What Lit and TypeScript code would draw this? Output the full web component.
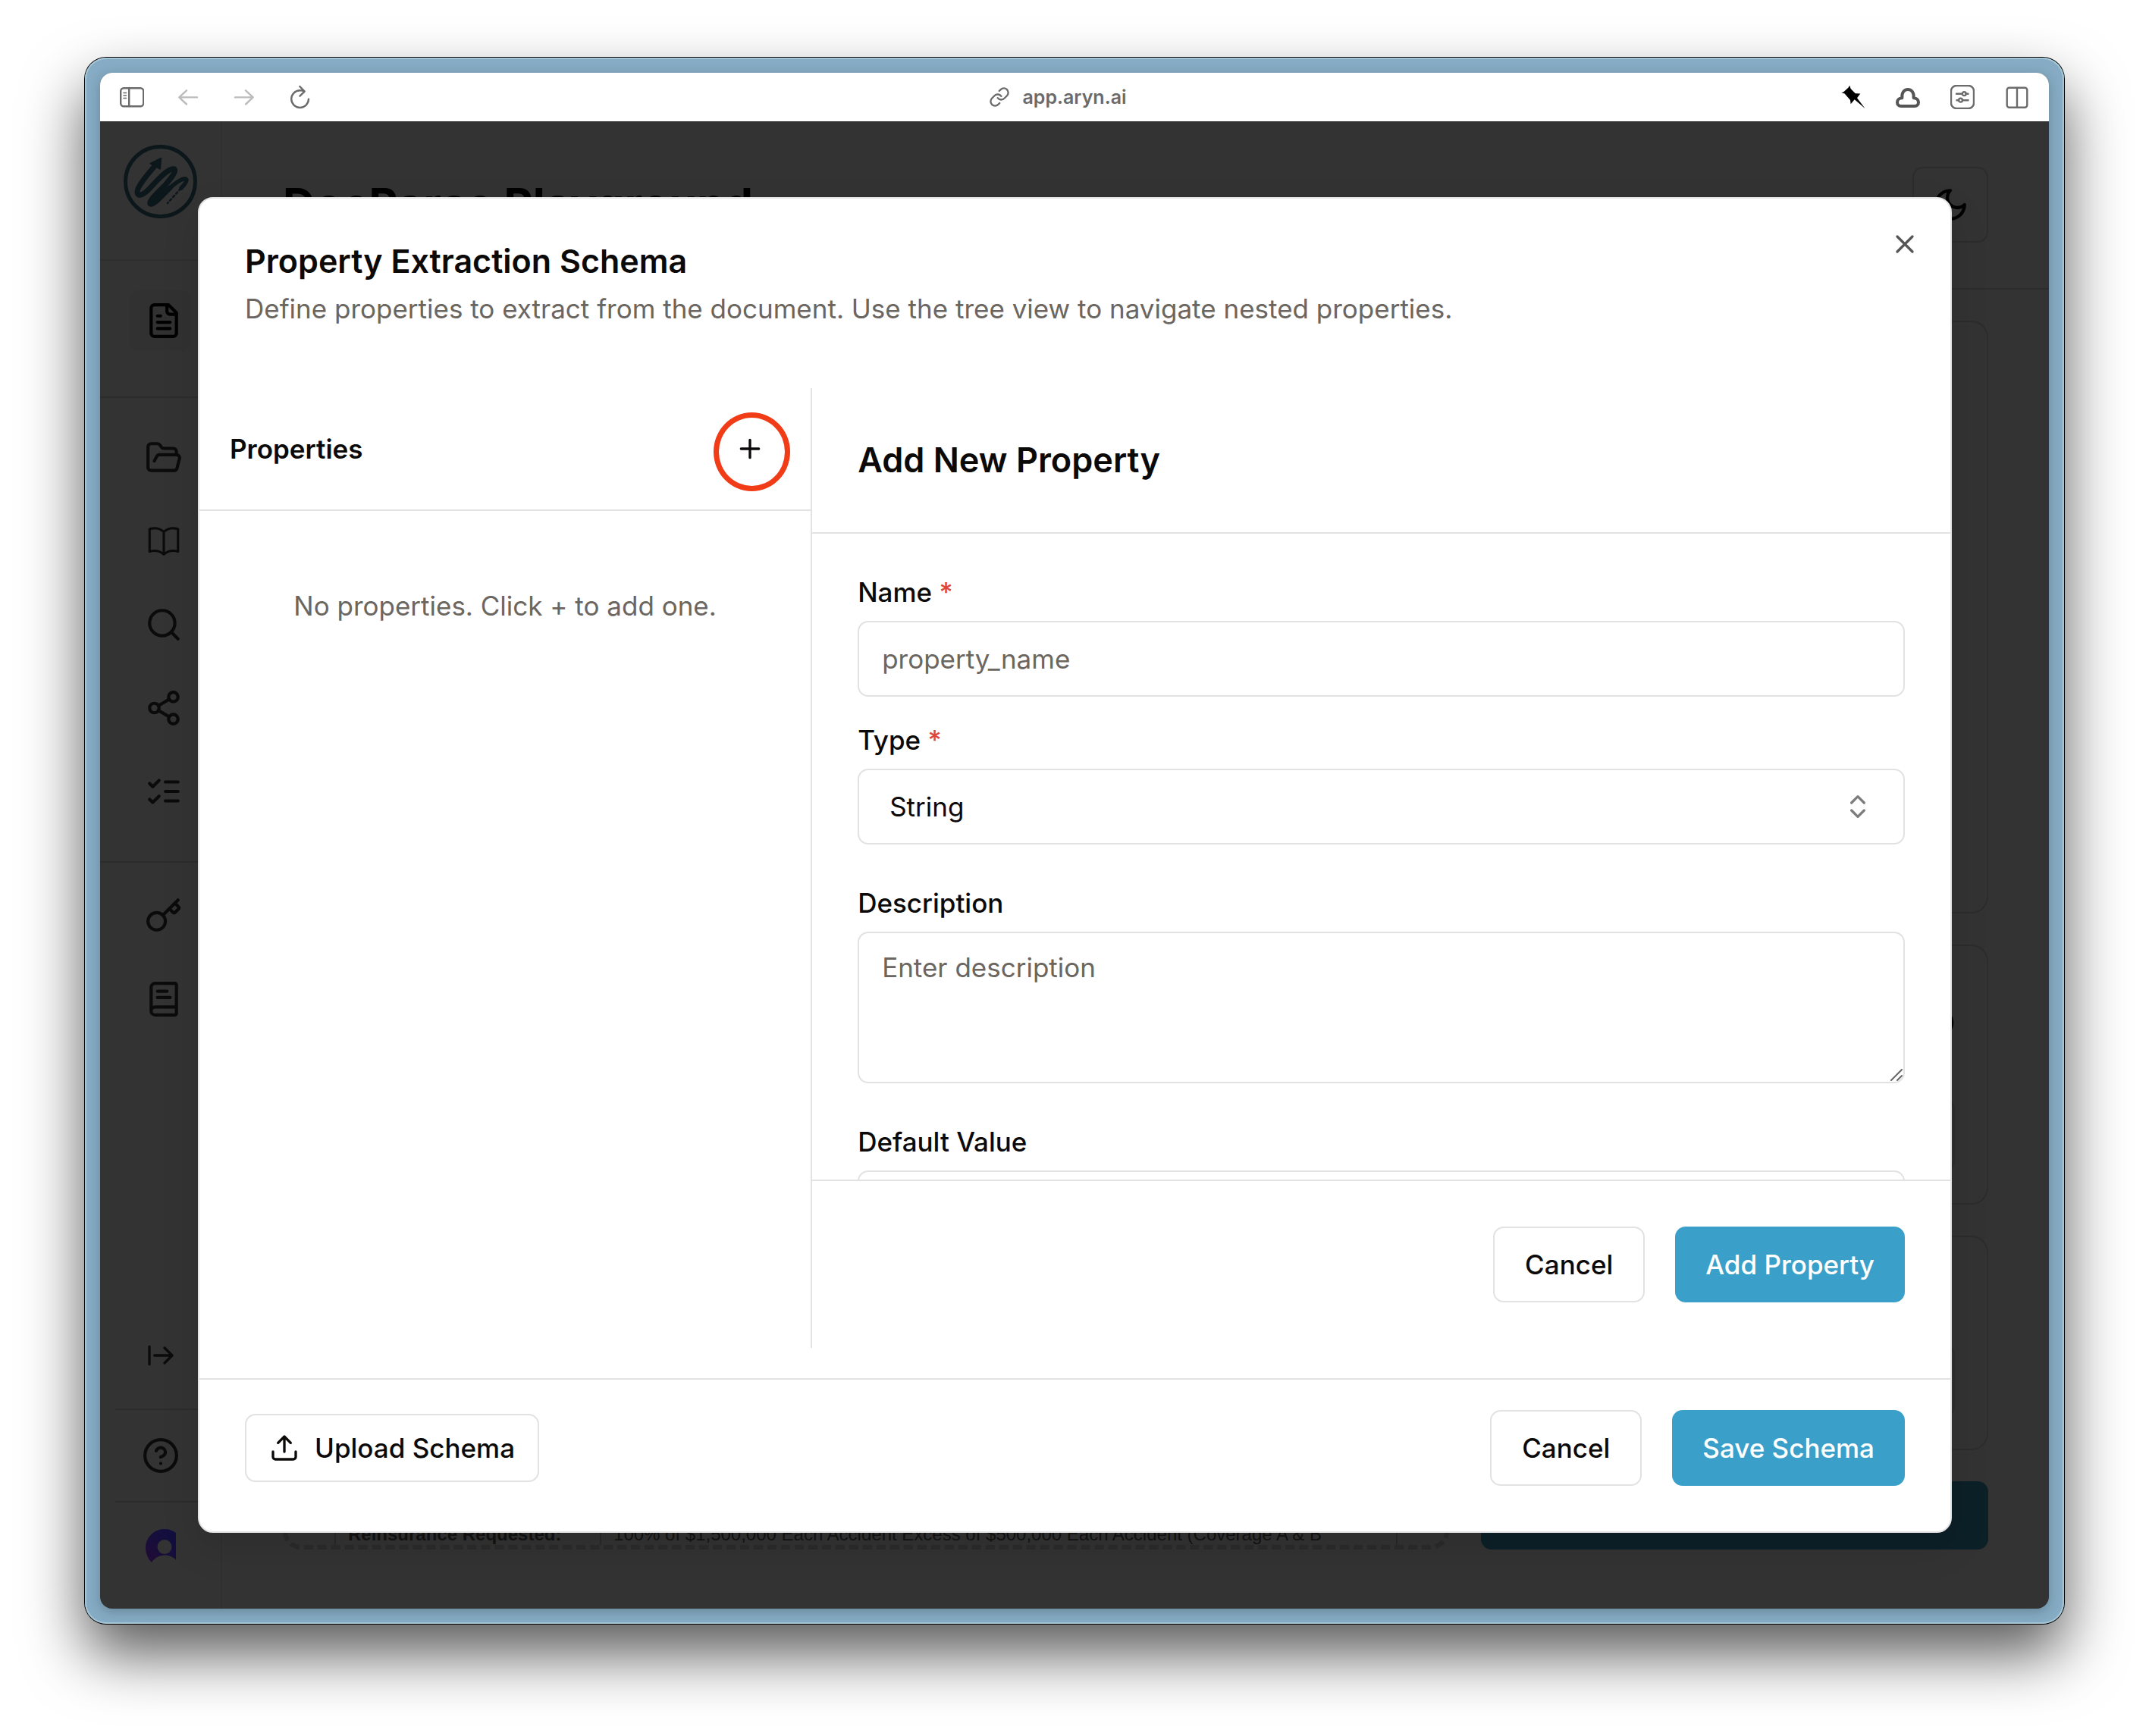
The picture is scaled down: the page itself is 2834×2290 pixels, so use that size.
import { LitElement, html, css, svg, nothing } from "lit";
import type { SVGTemplateResult } from "lit";
import { customElement, state } from "lit/decorators.js";

/* Stroke icons on a 24-unit grid. */
const icons: Record<string, SVGTemplateResult> = {
  file: svg`<path d="M15 2H6a2 2 0 0 0-2 2v16a2 2 0 0 0 2 2h12a2 2 0 0 0 2-2V7Z"/><path d="M14 2v4a2 2 0 0 0 2 2h4M10 9H8M16 13H8M16 17H8"/>`,
  folder: svg`<path d="m6 14 1.5-2.9A2 2 0 0 1 9.24 10H20a2 2 0 0 1 1.94 2.5l-1.54 6a2 2 0 0 1-1.95 1.5H4a2 2 0 0 1-2-2V5a2 2 0 0 1 2-2h3.9a2 2 0 0 1 1.69.9l.81 1.2a2 2 0 0 0 1.67.9H18a2 2 0 0 1 2 2v2"/>`,
  book: svg`<path stroke-width="1.5" d="M12 6.042A8.967 8.967 0 0 0 6 3.75c-1.052 0-2.062.18-3 .512v14.25A8.987 8.987 0 0 1 6 18c2.305 0 4.408.867 6 2.292m0-14.25a8.966 8.966 0 0 1 6-2.292c1.052 0 2.062.18 3 .512v14.25A8.987 8.987 0 0 0 18 18a8.967 8.967 0 0 0-6 2.292m0-14.25v14.25"/>`,
  search: svg`<circle cx="11" cy="11" r="8"/><path d="m21 21-4.3-4.3"/>`,
  share: svg`<circle cx="18" cy="5" r="3"/><circle cx="6" cy="12" r="3"/><circle cx="18" cy="19" r="3"/><path d="m8.59 13.51 6.83 3.98M15.41 6.51l-6.82 3.98"/>`,
  checks: svg`<path d="m3 17 2 2 4-4M3 7l2 2 4-4M13 6h8M13 12h8M13 18h8"/>`,
  key: svg`<path d="m15.5 7.5 2.3 2.3a1 1 0 0 0 1.4 0l2.1-2.1a1 1 0 0 0 0-1.4L19 4M21 2l-9.6 9.6"/><circle cx="7.5" cy="15.5" r="5.5"/>`,
  docs: svg`<path d="M4 19.5v-15A2.5 2.5 0 0 1 6.5 2H19a1 1 0 0 1 1 1v18a1 1 0 0 1-1 1H6.5a1 1 0 0 1 0-5H20M8 11h8M8 7h6"/>`,
  expand: svg`<path d="M3 5v14M21 12H7M15 18l6-6-6-6"/>`,
  help: svg`<circle cx="12" cy="12" r="10"/><path d="M9.09 9a3 3 0 0 1 5.83 1c0 2-3 3-3 3M12 17h.01"/>`,
  moon: svg`<path d="M12 3a6 6 0 0 0 9 9 9 9 0 1 1-9-9Z"/>`,
  close: svg`<path d="M18 6 6 18M6 6l12 12"/>`,
  plus: svg`<path d="M5 12h14M12 5v14"/>`,
  chevrons: svg`<path d="m7 15 5 5 5-5M7 9l5-5 5 5"/>`,
  upload: svg`<path d="M21 15v4a2 2 0 0 1-2 2H5a2 2 0 0 1-2-2v-4M17 8l-5-5-5 5M12 3v12"/>`,
  link: svg`<path d="M10 13a5 5 0 0 0 7.54.54l3-3a5 5 0 0 0-7.07-7.07l-1.72 1.71"/><path d="M14 11a5 5 0 0 0-7.54-.54l-3 3a5 5 0 0 0 7.07 7.07l1.71-1.71"/>`,
};

/* Browser toolbar glyphs on a 32-unit grid. */
const toolbar: Record<string, SVGTemplateResult> = {
  panel: svg`<rect x="1.2" y="4.2" width="30" height="24" rx="4"/><path d="M12.2 4v24"/><path stroke-width="1.6" d="M5 10.5h3.5M5 14h3.5M5 17.5h3.5"/>`,
  back: svg`<path d="M28 16.4H4.5M14 7.3 4.3 16.4 14 25.5"/>`,
  forward: svg`<path d="M4 16.4h23.5M18 7.3l9.7 9.1-9.7 9.1"/>`,
  reload: svg`<path d="M27 18.6A11.4 11.4 0 1 1 15.6 7.2Q19 7.2 21.6 8.7M15.3 2l6.4 6.7-6.2 6"/>`,
  pin: svg`<path stroke="none" fill="#000" d="M.3 10.3 3 9.6 9.6 3.4 11.3.7 12.6 5 18.7 11.2l6.6.2L21 17.2 31.7 31.3 17.7 19.3 12.7 25.3 12 20 4.6 11.6Z"/>`,
  cloud: svg`<path stroke="#555" stroke-width="4" d="M8.4 17.2C4 17.4 2 20 2 23c0 3 2 5 5 5h18c3 0 5-2 5-5 0-3-2-5.6-6.4-5.8C24.5 10.5 21 6 16 6S7.5 10.5 8.4 17.2Z"/>`,
  sliders: svg`<rect x="1" y="1" width="30" height="30" rx="7"/><path d="M8 11.7h7.5M20.5 11.7h3M8.5 20.2H11M16 20.2h7.5"/><circle cx="18.2" cy="11.7" r="2.4"/><circle cx="13.5" cy="20.2" r="2.4"/>`,
  split: svg`<rect x="2.7" y="3.7" width="26.6" height="26" rx="3"/><path d="M16 4v25"/>`,
};

const tone = css`
  :host {
    font-family: Inter, "Liberation Sans", sans-serif;
    color: #0c0a09;
  }
  *,
  *::before,
  *::after {
    box-sizing: border-box;
  }
  button,
  input,
  select,
  textarea {
    font: inherit;
    color: inherit;
    margin: 0;
  }
  button {
    cursor: pointer;
  }
  h1,
  h2,
  h3,
  p {
    margin: 0;
  }
  svg {
    display: block;
    flex: none;
    fill: none;
    stroke: currentColor;
    stroke-width: 2;
    stroke-linecap: round;
    stroke-linejoin: round;
  }
  .icon-sm {
    width: 40px;
    height: 40px;
  }
  .icon {
    width: 50px;
    height: 50px;
  }
`;

const icon = (name: string, cls = "icon") =>
  html`<svg class=${cls} viewBox="0 0 24 24" aria-hidden="true">${icons[name]}</svg>`;

@customElement("browser-bar")
export class BrowserBar extends LitElement {
  static styles = [
    tone,
    css`
      :host {
        display: grid;
        grid-template-columns: 1fr auto 1fr;
        align-items: center;
        height: 64px;
        padding: 0 26px;
        background: #fff;
        color: #6b6b6b;
      }
      .group {
        display: flex;
        align-items: center;
      }
      .left {
        gap: 42px;
      }
      .right {
        gap: 40px;
        justify-content: flex-end;
      }
      button {
        display: block;
        padding: 0;
        border: 0;
        background: none;
      }
      button:disabled {
        color: #bcbcbc;
      }
      .tool {
        width: 32px;
        height: 32px;
        stroke-width: 2.4;
      }
      .link {
        width: 28px;
        height: 28px;
      }
      .address {
        display: flex;
        align-items: center;
        gap: 16px;
        padding-right: 44px;
        font-size: 25px;
        font-weight: 600;
        line-height: 32px;
      }
    `,
  ];

  private tool(name: string, disabled = false) {
    return html`<button type="button" aria-label=${name} ?disabled=${disabled}>
      <svg class="tool" viewBox="0 0 32 32" aria-hidden="true">${toolbar[name]}</svg>
    </button>`;
  }

  render() {
    return html`
      <div class="group left">
        ${this.tool("panel")} ${this.tool("back", true)} ${this.tool("forward", true)}
        ${this.tool("reload")}
      </div>
      <div class="address">${icon("link", "link")}<span>app.aryn.ai</span></div>
      <div class="group right">
        ${this.tool("pin")} ${this.tool("cloud")} ${this.tool("sliders")} ${this.tool("split")}
      </div>
    `;
  }
}

@customElement("side-nav")
export class SideNav extends LitElement {
  static styles = [
    tone,
    css`
      :host {
        display: flex;
        flex-direction: column;
        width: 161px;
        border-right: 2px solid #303030;
        color: #0b0b0b;
      }
      .brand {
        padding: 31px 31px 54px;
        border-bottom: 2px solid #2e2e2e;
      }
      .logo {
        width: 97px;
        height: 97px;
        color: #0c171b;
      }
      nav {
        display: flex;
        flex-direction: column;
        padding-left: 39px;
        border-bottom: 2px solid #2c2c2c;
      }
      .first {
        padding-top: 39px;
        padding-bottom: 60px;
      }
      .second {
        padding-top: 24px;
        padding-bottom: 37px;
      }
      .third {
        padding-top: 15px;
        border-bottom: 0;
      }
      a {
        display: flex;
        align-items: center;
        height: 110px;
        padding-left: 20px;
        color: inherit;
      }
      a.active {
        width: 80px;
        height: 80px;
        border-radius: 12px;
        background: #313131;
        color: #000;
      }
      .foot {
        display: flex;
        flex-direction: column;
        margin-top: auto;
        padding: 0 20px;
      }
      .foot button {
        display: flex;
        align-items: center;
        justify-content: center;
        padding: 0;
        border: 0;
        background: none;
      }
      .foot .expand {
        height: 140px;
      }
      .foot .help {
        height: 124px;
        border-top: 2px solid #2c2c2c;
        border-bottom: 2px solid #2c2c2c;
      }
      .foot .account {
        padding: 35px 0 60px;
      }
      .avatar {
        width: 40px;
        height: 45px;
        stroke: none;
      }
    `,
  ];

  private item(name: string, active = false) {
    return html`<a href="#${name}" class=${active ? "active" : nothing} aria-label=${name}
      >${icon(name)}</a
    >`;
  }

  render() {
    return html`
      <div class="brand">
        <svg class="logo" viewBox="0 0 97 97" aria-hidden="true">
          <circle cx="48.5" cy="48.5" r="46" stroke-width="5" />
          <path
            stroke-width="7"
            d="M41 28C30 41 18 55 18 62C18 69 25 67 33 59C45 46 59 30 67 32C70 35 62 45 54 54C44 64 33 74 35 78C40 80 51 66 61 57"
          />
          <path
            stroke-width="5.4"
            d="M35 78C40 80 51 66 61 57C71 48 81 42 83 46C83 49 79 54 76 57"
          />
          <path stroke-width="2.6" stroke-dasharray="2.5 3.6" d="M75 58L58 77" />
          <path fill="currentColor" d="M49.2 18L35.5 24.6L48 31.6Z" />
        </svg>
      </div>
      <nav class="first">${this.item("file", true)}</nav>
      <nav class="second">
        ${["folder", "book", "search", "share", "checks"].map((n) => this.item(n))}
      </nav>
      <nav class="third">${["key", "docs"].map((n) => this.item(n))}</nav>
      <div class="foot">
        <button type="button" class="expand" aria-label="expand">
          ${icon("expand", "icon-sm")}
        </button>
        <button type="button" class="help" aria-label="help">${icon("help")}</button>
        <button type="button" class="account" aria-label="account">
          <svg class="avatar" viewBox="0 0 40 45" aria-hidden="true">
            <defs>
              <linearGradient id="g" x1="0" y1="1" x2="0.7" y2="0.2">
                <stop offset="0" stop-color="#220b35" />
                <stop offset="1" stop-color="#120f3e" />
              </linearGradient>
            </defs>
            <path
              fill="url(#g)"
              d="M40 5V41C37 37 31 34.5 25 34.5C18 34.5 12 38 8 44C3 39 0 32 0 25C0 11 11 0 25 0C31 0 36 2 40 5Z"
            />
            <circle cx="25" cy="23.5" r="9.5" fill="#333" />
          </svg>
        </button>
      </div>
    `;
  }
}

@customElement("playground-page")
export class PlaygroundPage extends LitElement {
  static styles = [
    tone,
    css`
      :host {
        display: flex;
        flex-direction: column;
        min-width: 0;
        color: #000;
      }
      header {
        display: flex;
        align-items: center;
        justify-content: space-between;
        height: 222px;
        padding: 0 80px;
        border-bottom: 2px solid #2c2c2c;
      }
      h1 {
        font-size: 59px;
        font-weight: 700;
        line-height: 60px;
      }
      .theme {
        display: grid;
        place-items: center;
        width: 100px;
        height: 100px;
        padding: 0;
        border: 2px solid #2c2c2c;
        border-radius: 14px;
        background: none;
      }
      .columns {
        flex: 1;
        min-height: 0;
        display: grid;
        grid-template-columns: minmax(0, 23fr) minmax(0, 10fr);
        gap: 42px;
        padding: 41px 80px 78px;
      }
      .preview {
        display: flex;
        flex-direction: column;
        justify-content: flex-end;
        padding: 0 62px;
        border: 6px dashed #2b2b2b;
        border-radius: 24px;
      }
      table {
        width: 100%;
        border-collapse: collapse;
        font: 24px/28px "Liberation Sans", Arial, sans-serif;
        color: #121212;
      }
      th,
      td {
        padding: 0 16px;
        border: 2px solid #292929;
        border-width: 0 2px;
        text-align: left;
        white-space: nowrap;
      }
      th {
        width: 25%;
      }
      .side {
        display: flex;
        flex-direction: column;
        gap: 41px;
      }
      .card {
        display: flex;
        flex-direction: column;
        justify-content: flex-end;
        gap: 42px;
        padding: 42px;
        border: 2px solid #2c2c2c;
        border-radius: 22px;
      }
      .card.grow {
        flex: 1;
      }
      .head {
        display: flex;
        align-items: center;
        justify-content: flex-end;
        height: 118px;
      }
      .head.short {
        height: 58px;
      }
      .field {
        height: 95px;
        border: 2px solid #2c2c2c;
        border-radius: 14px;
      }
      .run {
        height: 90px;
        border-radius: 14px;
        background: #0c2028;
      }
    `,
  ];

  render() {
    return html`
      <header>
        <h1>DocParse Playground</h1>
        <button type="button" class="theme" aria-label="theme">${icon("moon")}</button>
      </header>
      <div class="columns">
        <section class="preview">
          <table>
            <tr>
              <th scope="row">Reinsurance Requested:</th>
              <td>100% of $1,500,000 Each Accident Excess of $500,000 Each Accident (Coverage A &amp; B</td>
            </tr>
          </table>
        </section>
        <div class="side">
          <div class="card grow"></div>
          <div class="card">
            <div class="head">${icon("help", "icon-sm")}</div>
            <div class="field"></div>
          </div>
          <div class="card">
            <div class="head short"></div>
            <div class="field"></div>
          </div>
          <div class="run"></div>
        </div>
      </div>
    `;
  }
}

@customElement("schema-dialog")
export class SchemaDialog extends LitElement {
  @state() private type = "String";

  static styles = [
    tone,
    css`
      :host {
        display: flex;
        flex-direction: column;
        overflow: hidden;
        border: 2px solid #e4e4e4;
        border-radius: 20px;
        background: #fff;
        box-shadow: 0 20px 50px rgba(0, 0, 0, 0.12);
        font-size: 35px;
        line-height: 50px;
      }
      .top {
        display: flex;
        align-items: flex-start;
        justify-content: space-between;
        padding: 40px;
      }
      .intro {
        display: flex;
        flex-direction: column;
        gap: 15px;
        padding: 20px;
      }
      h2 {
        font-size: 43px;
        font-weight: 600;
        line-height: 45px;
      }
      .intro p,
      .empty {
        color: #6b665f;
      }
      .close {
        padding: 0;
        border: 0;
        background: none;
        color: #555;
      }
      .body {
        flex: 1;
        min-height: 0;
        display: grid;
        grid-template-columns: 35% minmax(0, 1fr);
        margin: 20px 0 40px;
      }
      .tree {
        border-right: 2px solid #e2e2e2;
      }
      .tree-head {
        display: flex;
        align-items: center;
        justify-content: space-between;
        padding: 40px;
        border-bottom: 2px solid #e2e2e2;
      }
      h3 {
        font-size: 35px;
        font-weight: 600;
      }
      .add {
        position: relative;
        display: grid;
        place-items: center;
        width: 80px;
        height: 80px;
        padding: 0;
        border: 0;
        background: none;
      }
      /* Callout ring laid over the add button. */
      .ring {
        position: absolute;
        inset: -8px -13px -16px -8px;
        border: 7px solid #f03c17;
        border-radius: 50%;
      }
      .empty {
        padding: 100px 20px;
        text-align: center;
      }
      .editor {
        display: flex;
        flex-direction: column;
        min-height: 0;
      }
      .editor-head {
        padding: 60px;
        border-bottom: 2px solid #e2e2e2;
      }
      .editor-head h2 {
        font-size: 45px;
        line-height: 70px;
      }
      form {
        flex: 1;
        min-height: 0;
        display: flex;
        flex-direction: column;
        gap: 60px;
        padding: 60px;
        overflow-y: auto;
        scrollbar-width: none;
      }
      .pair {
        display: flex;
        flex-direction: column;
        gap: 40px;
      }
      .row {
        display: flex;
        flex-direction: column;
        gap: 20px;
      }
      label {
        font-weight: 500;
        line-height: 35px;
      }
      label span {
        color: #e0473b;
      }
      input,
      select,
      textarea {
        display: block;
        width: 100%;
        height: 100px;
        padding: 0 30px;
        border: 2px solid #e2e2e2;
        border-radius: 14px;
        background: #fff;
        outline: 0;
      }
      ::placeholder {
        color: #6b665f;
        opacity: 1;
      }
      select {
        appearance: none;
        grid-area: 1 / 1;
        padding: 0 40px;
      }
      .choice {
        display: grid;
        align-items: center;
      }
      .choice svg {
        grid-area: 1 / 1;
        justify-self: end;
        margin-right: 42px;
        color: #7d7d7d;
        pointer-events: none;
      }
      .area {
        position: relative;
      }
      textarea {
        height: 200px;
        padding: 20px 30px;
        resize: none;
      }
      .grip {
        position: absolute;
        right: 3px;
        bottom: 3px;
        width: 16px;
        height: 16px;
        color: #666;
      }
      .actions {
        display: flex;
        justify-content: flex-end;
        gap: 40px;
      }
      .editor .actions {
        padding: 60px;
        border-top: 2px solid #e2e2e2;
      }
      .bottom {
        display: flex;
        align-items: center;
        justify-content: space-between;
        padding: 40px 60px 60px;
        border-top: 2px solid #e2e2e2;
      }
      .btn {
        display: flex;
        align-items: center;
        gap: 20px;
        height: 100px;
        padding: 0 40px;
        border: 2px solid #e2e2e2;
        border-radius: 14px;
        background: #fff;
        font-weight: 500;
      }
      .btn.primary {
        border: 0;
        background: #3aa0c9;
        color: #fff;
      }
      .btn.compact {
        height: 90px;
        padding: 0 30px;
      }
    `,
  ];

  private pick(e: Event) {
    this.type = (e.target as HTMLSelectElement).value;
  }

  render() {
    return html`
      <div class="top">
        <div class="intro">
          <h2>Property Extraction Schema</h2>
          <p>
            Define properties to extract from the document. Use the tree view to navigate nested
            properties.
          </p>
        </div>
        <button type="button" class="close" aria-label="close">${icon("close", "icon-sm")}</button>
      </div>
      <div class="body">
        <section class="tree">
          <div class="tree-head">
            <h3>Properties</h3>
            <button type="button" class="add" aria-label="add">
              ${icon("plus", "icon-sm")}<span class="ring"></span>
            </button>
          </div>
          <p class="empty">No properties. Click + to add one.</p>
        </section>
        <section class="editor">
          <div class="editor-head"><h2>Add New Property</h2></div>
          <form>
            <div class="pair">
              <div class="row">
                <label for="name">Name <span>*</span></label>
                <input id="name" type="text" placeholder="property_name" />
              </div>
              <div class="row">
                <label for="type">Type <span>*</span></label>
                <div class="choice">
                  <select id="type" .value=${this.type} @change=${this.pick}>
                    <option>String</option>
                  </select>
                  ${icon("chevrons", "icon-sm")}
                </div>
              </div>
            </div>
            <div class="row">
              <label for="description">Description</label>
              <div class="area">
                <textarea id="description" placeholder="Enter description"></textarea>
                <svg class="grip" viewBox="0 0 16 16" aria-hidden="true">
                  <path d="M1 15 15 1M9 15l6-6" />
                </svg>
              </div>
            </div>
            <div class="row">
              <label for="fallback">Default Value</label>
              <input id="fallback" type="text" />
            </div>
          </form>
          <div class="actions">
            <button type="button" class="btn">Cancel</button>
            <button type="button" class="btn primary">Add Property</button>
          </div>
        </section>
      </div>
      <div class="bottom">
        <button type="button" class="btn compact">${icon("upload", "icon-sm")}Upload Schema</button>
        <div class="actions">
          <button type="button" class="btn">Cancel</button>
          <button type="button" class="btn primary">Save Schema</button>
        </div>
      </div>
    `;
  }
}

@customElement("app-root")
export class AppRoot extends LitElement {
  static styles = [
    tone,
    css`
      :host {
        display: flex;
        box-sizing: border-box;
        height: 100vh;
        padding: 76px 112px 148px;
        background: #fff;
      }
      .frame {
        flex: 1;
        min-width: 0;
        display: flex;
        padding: 20px;
        border-radius: 28px;
        background: #85acc4;
        box-shadow:
          inset 0 0 0 2px #a6c6d6,
          0 0 0 1px #000,
          0 40px 80px rgba(0, 0, 0, 0.65);
      }
      .window {
        flex: 1;
        min-width: 0;
        display: flex;
        flex-direction: column;
        overflow: hidden;
        border-radius: 16px;
        background: #333;
        box-shadow: 0 4px 16px rgba(0, 0, 0, 0.22);
      }
      .view {
        position: relative;
        flex: 1;
        min-height: 0;
        display: flex;
      }
      playground-page {
        flex: 1;
      }
      .overlay {
        position: absolute;
        inset: 0;
        display: flex;
        padding: 100px 128px 100px 129px;
      }
      schema-dialog {
        flex: 1;
        min-width: 0;
      }
    `,
  ];

  render() {
    return html`
      <div class="frame">
        <div class="window">
          <browser-bar></browser-bar>
          <div class="view">
            <side-nav></side-nav>
            <playground-page></playground-page>
            <div class="overlay"><schema-dialog></schema-dialog></div>
          </div>
        </div>
      </div>
    `;
  }
}
